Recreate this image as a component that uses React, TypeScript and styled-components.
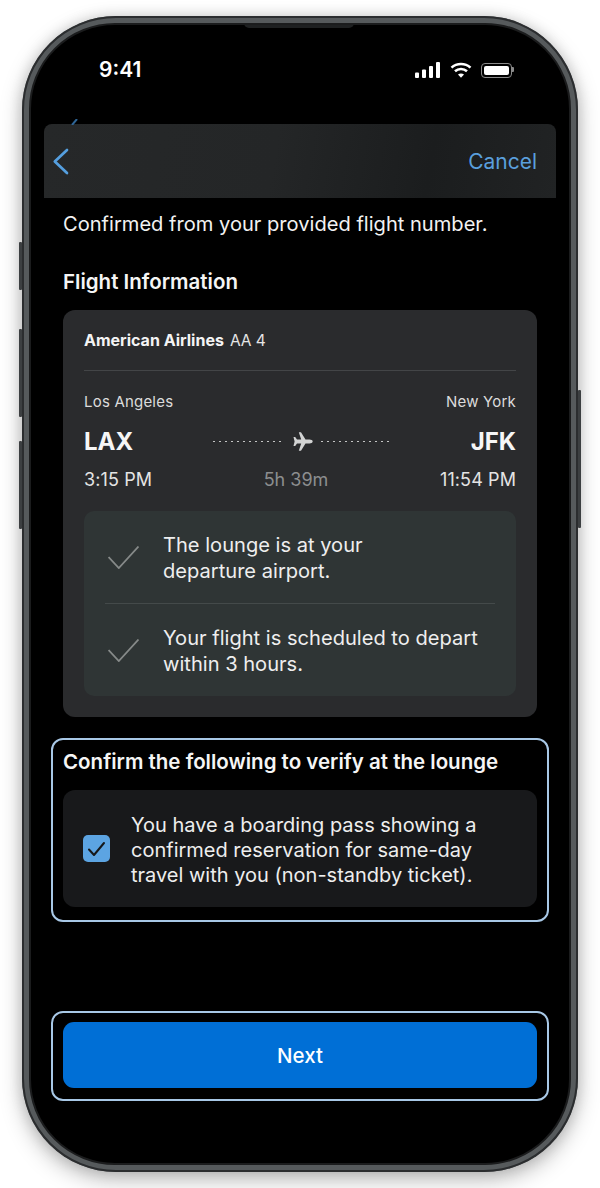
import React from 'react';
import styled, { createGlobalStyle } from 'styled-components';

const GlobalStyle = createGlobalStyle`
  html, body {
    margin: 0;
    padding: 0;
    background: #fff;
    font-family: Inter, "Liberation Sans", sans-serif;
  }
`;

const App: React.FC = () => {
  return (
    <>
      <GlobalStyle />
      <Page>
        <Phone>
          <SideButton $side="left" $top={226} $height={48} />
          <SideButton $side="left" $top={313} $height={88} />
          <SideButton $side="left" $top={425} $height={88} />
          <SideButton $side="right" $top={374} $height={138} />
          <Screen>
            <Notch />
            <StatusBar>
              <Time>9:41</Time>
              <StatusIcons>
                <svg width="26" height="16" viewBox="0 0 26 16" fill="#fff">
                  <rect x="0" y="10.5" width="4" height="5.5" rx="1" />
                  <rect x="7" y="7.5" width="4" height="8.5" rx="1" />
                  <rect x="14" y="4" width="4" height="12" rx="1" />
                  <rect x="21" y="0" width="4" height="16" rx="1" />
                </svg>
                <svg width="22" height="16" viewBox="0 0 22 16" fill="none">
                  <path d="M1.5 5.6C6.8 .8 15.2 .8 20.5 5.6" stroke="#fff" strokeWidth="2.6" />
                  <path d="M5 9.2C8.4 6.2 13.6 6.2 17 9.2" stroke="#fff" strokeWidth="2.6" />
                  <path d="M8 12.5C9.8 11 12.2 11 14 12.5L11 15.8Z" fill="#fff" />
                </svg>
                <Battery>
                  <BatteryFill />
                </Battery>
              </StatusIcons>
            </StatusBar>
            <HiddenChevron>
              <svg width="8" height="6" viewBox="0 0 8 6" fill="none">
                <path d="M6 0L1 6" stroke="#2f6596" strokeWidth="2" />
              </svg>
            </HiddenChevron>
            <NavBar>
              <svg width="17" height="27" viewBox="0 0 17 27" fill="none">
                <path d="M15 2L2.8 13.5L15 25" stroke="#559fdf" strokeWidth="2.7" strokeLinecap="round" strokeLinejoin="round" />
              </svg>
              <NavAction>Cancel</NavAction>
            </NavBar>
            <Content>
              <Intro>Confirmed from your provided flight number.</Intro>
              <SectionTitle>Flight Information</SectionTitle>
              <FlightCard>
                <AirlineRow>
                  <strong>American Airlines</strong>
                  <span>AA 4</span>
                </AirlineRow>
                <RouteGrid>
                  <City>Los Angeles</City>
                  <span />
                  <City $right>New York</City>
                  <Code>LAX</Code>
                  <PlaneTrack>
                    <Dots />
                    <PlaneIcon width="20" height="19" viewBox="0 0 20 19" fill="#d2d3d3">
                      <path d="M19.7 9.5c0-1.2-1.6-1.9-3.2-1.9h-4L8 .3H5.8l2.4 7.3H4L2.2 5H.5l1.1 4.5L.5 14h1.7L4 11.4h4.2l-2.4 7.3H8l4.5-7.3h4c1.6 0 3.2-.7 3.2-1.9Z" />
                    </PlaneIcon>
                    <Dots />
                  </PlaneTrack>
                  <Code $right>JFK</Code>
                  <FlightTime>3:15 PM</FlightTime>
                  <Duration>5h 39m</Duration>
                  <FlightTime $right>11:54 PM</FlightTime>
                </RouteGrid>
                <ChecksPanel>
                  <CheckRow>
                    <CheckMark />
                    <CheckText>
                      The lounge is at your
                      <br />
                      departure airport.
                    </CheckText>
                  </CheckRow>
                  <CheckRow>
                    <CheckMark />
                    <CheckText>
                      Your flight is scheduled to depart
                      <br />
                      within 3 hours.
                    </CheckText>
                  </CheckRow>
                </ChecksPanel>
              </FlightCard>
            </Content>
            <FocusRing>
              <ConfirmTitle>Confirm the following to verify at the lounge</ConfirmTitle>
              <ConfirmPanel>
                <Checkbox>
                  <svg width="19" height="16" viewBox="0 0 19 16" fill="none">
                    <path d="M2 8.5L7 14L17 2" stroke="#16181a" strokeWidth="2" strokeLinecap="round" strokeLinejoin="round" />
                  </svg>
                </Checkbox>
                <ConfirmText>
                  You have a boarding pass showing a
                  <br />
                  confirmed reservation for same-day
                  <br />
                  travel with you (non-standby ticket).
                </ConfirmText>
              </ConfirmPanel>
            </FocusRing>
            <Spacer />
            <FocusRing $button>
              <NextButton>Next</NextButton>
            </FocusRing>
            <BottomGap />
          </Screen>
        </Phone>
      </Page>
    </>
  );
};

export default App;

const CheckMark: React.FC = () => (
  <svg width="31" height="23" viewBox="0 0 31 23" fill="none">
    <path d="M.6 11L10.8 22L30.5 .5" stroke="#868a89" strokeWidth="1.8" />
  </svg>
);

const Page = styled.div`
  width: 600px;
  height: 1188px;
  padding: 16px 22px;
  box-sizing: border-box;
  overflow: hidden;
`;

const Phone = styled.div`
  position: relative;
  width: 556px;
  height: 1156px;
  box-sizing: border-box;
  padding: 7px;
  border-radius: 94px;
  background: #565a5c;
  box-shadow: inset 0 0 0 2px #2b2d2f, 0 8px 22px rgba(0, 0, 0, 0.26), 0 0 14px rgba(0, 0, 0, 0.14);
`;

const SideButton = styled.div<{ $side: 'left' | 'right'; $top: number; $height: number }>`
  position: absolute;
  top: ${({ $top }) => $top}px;
  ${({ $side }) => ($side === 'left' ? 'left: -3px;' : 'right: -3px;')}
  width: 3px;
  height: ${({ $height }) => $height}px;
  background: #3c3f41;
  border-radius: 1px;
`;

const Screen = styled.div`
  position: relative;
  height: 100%;
  box-sizing: border-box;
  display: flex;
  flex-direction: column;
  background: #000;
  border: 2px solid #1b1c1d;
  border-radius: 86px;
  overflow: hidden;
`;

const Notch = styled.div`
  position: absolute;
  top: -2px;
  left: 213px;
  width: 110px;
  height: 5px;
  background: #1e2021;
  border-radius: 0 0 6px 6px;
`;

const StatusBar = styled.div`
  height: 99px;
  flex: none;
  display: flex;
  align-items: flex-start;
  justify-content: space-between;
  padding: 33px 57px 0 68px;
  box-sizing: border-box;
`;

const Time = styled.div`
  font-size: 21px;
  line-height: 24px;
  font-weight: 600;
  color: #fff;
`;

const StatusIcons = styled.div`
  display: flex;
  align-items: center;
  gap: 9px;
  height: 24px;
`;

const Battery = styled.div`
  position: relative;
  width: 31px;
  height: 15px;
  box-sizing: border-box;
  padding: 2px;
  border: 1px solid #8a8a8a;
  border-radius: 4px;

  &::after {
    content: '';
    position: absolute;
    top: 3px;
    right: -3px;
    width: 2px;
    height: 5px;
    background: #8a8a8a;
    border-radius: 0 1px 1px 0;
  }
`;

const BatteryFill = styled.div`
  height: 100%;
  background: #fff;
  border-radius: 2px;
`;

const HiddenChevron = styled.div`
  position: absolute;
  top: 94px;
  left: 40px;
  line-height: 0;
`;

const NavBar = styled.div`
  flex: none;
  height: 74px;
  margin: 0 13px;
  padding: 0 19px 0 8px;
  box-sizing: border-box;
  display: flex;
  align-items: center;
  justify-content: space-between;
  background: linear-gradient(100deg, #262829 0%, #242627 45%, #1b1d1e 75%, #212324 100%);
  border-radius: 8px 8px 0 0;
`;

const NavAction = styled.div`
  font-size: 21px;
  color: #5a9fdc;
`;

const Content = styled.div`
  flex: none;
  padding: 0 32px;
`;

const Intro = styled.div`
  margin-top: 13px;
  font-size: 20.1px;
  line-height: 26px;
  color: #f2f2f2;
`;

const SectionTitle = styled.div`
  margin-top: 32px;
  font-size: 20.5px;
  line-height: 26px;
  font-weight: 600;
  color: #f5f5f5;
`;

const FlightCard = styled.div`
  margin-top: 15px;
  height: 407px;
  box-sizing: border-box;
  padding: 21px;
  background: #2a2b2d;
  border-radius: 12px;
`;

const AirlineRow = styled.div`
  height: 40px;
  box-sizing: border-box;
  border-bottom: 1px solid #434547;
  font-size: 15.5px;
  line-height: 18px;
  color: #e6e6e6;

  strong {
    margin-right: 6px;
    font-size: 16px;
    font-weight: 700;
    color: #f4f4f4;
  }
`;

const RouteGrid = styled.div`
  margin-top: 20px;
  display: grid;
  grid-template-columns: 1fr 1fr 1fr;
  grid-template-rows: 20px 60px 16px;
  align-items: center;
`;

const City = styled.div<{ $right?: boolean }>`
  font-size: 15px;
  letter-spacing: 0.2px;
  color: #dcdcdc;
  text-align: ${({ $right }) => ($right ? 'right' : 'left')};
`;

const Code = styled.div<{ $right?: boolean }>`
  font-size: 24px;
  font-weight: 700;
  color: #f6f6f6;
  text-align: ${({ $right }) => ($right ? 'right' : 'left')};
`;

const PlaneTrack = styled.div`
  display: flex;
  align-items: center;
  justify-content: center;
  padding-left: 3px;
`;

const PlaneIcon = styled.svg`
  flex: none;
  margin: 0 8px 0 11px;
`;

const Dots = styled.div`
  width: 69px;
  height: 1px;
  flex: none;
  background: repeating-linear-gradient(90deg, #c4c5c5 0 2px, transparent 2px 6px);
`;

const FlightTime = styled.div<{ $right?: boolean }>`
  font-size: 18px;
  letter-spacing: 0.1px;
  color: #e4e4e4;
  text-align: ${({ $right }) => ($right ? 'right' : 'left')};
`;

const Duration = styled.div`
  font-size: 18px;
  color: #8c8e8f;
  text-align: center;
  padding-right: 8px;
`;

const ChecksPanel = styled.div`
  margin-top: 24px;
  padding: 0 21px;
  background: #2f3535;
  border-radius: 10px;
`;

const CheckRow = styled.div`
  height: 92px;
  box-sizing: border-box;
  display: flex;
  align-items: center;
  gap: 24px;
  padding-left: 3px;

  & + & {
    height: 93px;
    border-top: 1px solid #444a4a;
  }
`;

const CheckText = styled.div`
  padding-top: 2px;
  font-size: 20.1px;
  line-height: 26px;
  color: #eeeeee;
`;

const FocusRing = styled.div<{ $button?: boolean }>`
  flex: none;
  margin: ${({ $button }) => ($button ? '0' : '21px')} 20px 0;
  padding: 9px 10px ${({ $button }) => ($button ? '11px' : '13px')};
  border: 2px solid #a8c8e6;
  border-radius: 12px;
`;

const ConfirmTitle = styled.div`
  font-size: 20.5px;
  line-height: 26px;
  font-weight: 600;
  color: #f5f5f5;
`;

const ConfirmPanel = styled.div`
  margin-top: 15px;
  height: 117px;
  box-sizing: border-box;
  display: flex;
  align-items: center;
  gap: 21px;
  padding-left: 20px;
  background: #18191b;
  border-radius: 12px;
`;

const Checkbox = styled.div`
  width: 27px;
  height: 27px;
  flex: none;
  display: flex;
  align-items: center;
  justify-content: center;
  background: #5ca4e2;
  border-radius: 5px;
`;

const ConfirmText = styled.div`
  padding-top: 3px;
  font-size: 20px;
  line-height: 25px;
  color: #eeeeee;
`;

const Spacer = styled.div`
  flex: 1;
`;

const NextButton = styled.div`
  height: 66px;
  display: flex;
  align-items: center;
  justify-content: center;
  background: #006fd6;
  border-radius: 11px;
  font-size: 20.5px;
  font-weight: 500;
  color: #fff;
`;

const BottomGap = styled.div`
  flex: none;
  height: 62px;
`;
